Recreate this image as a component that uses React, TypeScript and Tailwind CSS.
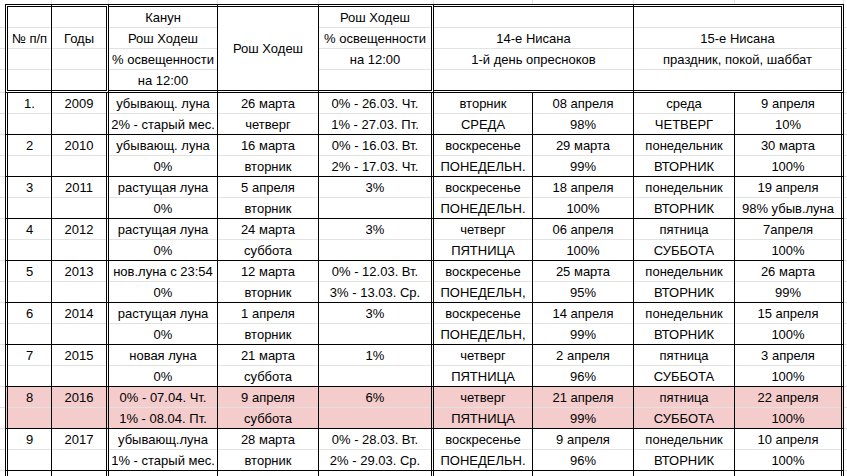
import React from 'react';

// column boxes, borders included (double lines are 3px "border-double")
const COLS = [
  'w-[47px] border-l-[3px] border-r',
  'w-[57px] border-r-[3px]',
  'w-[109px] border-r',
  'w-[101px] border-r',
  'w-[115px] border-r-[3px]',
  'w-[99px] border-r',
  'w-[101px] border-r',
  'w-[101px] border-r',
  'w-[109px] border-r-[3px]',
];

type Pair = [string, string];
type Row = { pink?: boolean; cells: Pair[] };

const rows: Row[] = [
  {
    cells: [
      ['1.', ''], ['2009', ''], ['убывающ. луна', '2% - старый мес.'], ['26 марта', 'четверг'],
      ['0% - 26.03. Чт.', '1% - 27.03. Пт.'], ['вторник', 'СРЕДА'], ['08 апреля', '98%'],
      ['среда', 'ЧЕТВЕРГ'], ['9 апреля', '10%'],
    ],
  },
  {
    cells: [
      ['2', ''], ['2010', ''], ['убывающ. луна', '0%'], ['16 марта', 'вторник'],
      ['0% - 16.03. Вт.', '2% - 17.03. Чт.'], ['воскресенье', 'ПОНЕДЕЛЬН.'], ['29 марта', '99%'],
      ['понедельник', 'ВТОРНИК'], ['30 марта', '100%'],
    ],
  },
  {
    cells: [
      ['3', ''], ['2011', ''], ['растущая луна', '0%'], ['5 апреля', 'вторник'],
      ['3%', ''], ['воскресенье', 'ПОНЕДЕЛЬН.'], ['18 апреля', '100%'],
      ['понедельник', 'ВТОРНИК'], ['19 апреля', '98% убыв.луна'],
    ],
  },
  {
    cells: [
      ['4', ''], ['2012', ''], ['растущая луна', '0%'], ['24 марта', 'суббота'],
      ['3%', ''], ['четверг', 'ПЯТНИЦА'], ['06 апреля', '100%'],
      ['пятница', 'СУББОТА'], ['7апреля', '100%'],
    ],
  },
  {
    cells: [
      ['5', ''], ['2013', ''], ['нов.луна с 23:54', '0%'], ['12 марта', 'вторник'],
      ['0% - 12.03. Вт.', '3% - 13.03. Ср.'], ['воскресенье', 'ПОНЕДЕЛЬН,'], ['25 марта', '95%'],
      ['понедельник', 'ВТОРНИК'], ['26 марта', '99%'],
    ],
  },
  {
    cells: [
      ['6', ''], ['2014', ''], ['растущая луна', '0%'], ['1 апреля', 'вторник'],
      ['3%', ''], ['воскресенье', 'ПОНЕДЕЛЬН,'], ['14 апреля', '99%'],
      ['понедельник', 'ВТОРНИК'], ['15 апреля', '100%'],
    ],
  },
  {
    cells: [
      ['7', ''], ['2015', ''], ['новая луна', '0%'], ['21 марта', 'суббота'],
      ['1%', ''], ['четверг', 'ПЯТНИЦА'], ['2 апреля', '96%'],
      ['пятница', 'СУББОТА'], ['3 апреля', '100%'],
    ],
  },
  {
    pink: true,
    cells: [
      ['8', ''], ['2016', ''], ['0% - 07.04. Чт.', '1% - 08.04. Пт.'], ['9 апреля', 'суббота'],
      ['6%', ''], ['четверг', 'ПЯТНИЦА'], ['21 апреля', '99%'],
      ['пятница', 'СУББОТА'], ['22 апреля', '100%'],
    ],
  },
  {
    cells: [
      ['9', ''], ['2017', ''], ['убывающ.луна', '1% - старый мес.'], ['28 марта', 'вторник'],
      ['0% - 28.03. Вт.', '2% - 29.03. Ср.'], ['воскресенье', 'ПОНЕДЕЛЬН.'], ['9 апреля', '96%'],
      ['понедельник', 'ВТОРНИК'], ['10 апреля', '100%'],
    ],
  },
  // next row, only its top edge shows
  { cells: Array.from({ length: 9 }, () => ['', ''] as Pair) },
];

const Margin = ({ w }: { w: string }) => (
  <div className={`${w} shrink-0`}>
    <div className="h-[21px] border-b border-[#e2e2e2]" />
    <div className="h-[21px] border-b border-[#e2e2e2]" />
  </div>
);

const HeadMargin = ({ w }: { w: string }) => (
  <div className={`${w} shrink-0`}>
    <div className="h-[24px] border-b border-[#e2e2e2]" />
    <div className="h-[21px] border-b border-[#e2e2e2]" />
    <div className="h-[21px] border-b border-[#e2e2e2]" />
    <div className="h-[23px] border-b border-[#e2e2e2]" />
  </div>
);

const Line = ({ children, last }: { children?: React.ReactNode; last?: boolean }) =>
  last ? (
    <div className="flex h-[20px] items-center justify-center whitespace-nowrap">{children}</div>
  ) : (
    <div className="flex h-[21px] items-center justify-center whitespace-nowrap border-b border-[#e2e2e2]">
      {children}
    </div>
  );

const HeadCell = ({ cls, lines }: { cls: string; lines: string[] }) => (
  <div className={`${cls} shrink-0 border-t-[3px] border-b-[3px] border-double border-black`}>
    <Line>{lines[0]}</Line>
    <Line>{lines[1]}</Line>
    <Line>{lines[2]}</Line>
    <Line last>{lines[3]}</Line>
  </div>
);

function Header() {
  return (
    <div className="flex">
      <HeadMargin w="w-[5px]" />
      <HeadCell cls={COLS[0]} lines={['', '№ п/п', '', '']} />
      <HeadCell cls={COLS[1]} lines={['', 'Годы', '', '']} />
      <HeadCell cls={COLS[2]} lines={['Канун', 'Рош Ходеш', '% освещенности', 'на 12:00']} />
      <div
        className={`${COLS[3]} shrink-0 border-t-[3px] border-b-[3px] border-double border-black flex items-center justify-center whitespace-nowrap`}
      >
        Рош Ходеш
      </div>
      <HeadCell cls={COLS[4]} lines={['Рош Ходеш', '% освещенности', 'на 12:00', '']} />
      <HeadCell cls="w-[200px] border-r" lines={['', '14-е Нисана', '1-й день опресноков', '']} />
      <HeadCell cls="w-[210px] border-r-[3px]" lines={['', '15-е Нисана', 'праздник, покой, шаббат', '']} />
      <HeadMargin w="w-[3px]" />
    </div>
  );
}

function DataRow({ row }: { row: Row }) {
  return (
    <div className="flex">
      <Margin w="w-[5px]" />
      {row.cells.map(([a, b], i) => (
        <div
          key={i}
          className={`${COLS[i]} shrink-0 border-b border-double border-black ${row.pink ? 'bg-[#f4cccc]' : 'bg-white'}`}
        >
          <Line>{a}</Line>
          <Line last>{b}</Line>
        </div>
      ))}
      <Margin w="w-[3px]" />
    </div>
  );
}

export default function App() {
  return (
    <div className="h-[476px] w-[847px] overflow-hidden bg-white text-[13px] leading-none text-black font-['Liberation_Sans',Arial,sans-serif]">
      {/* strip above the sheet, only the gridlines */}
      <div className="flex h-[4px]">
        <div className="w-[5px] shrink-0" />
        {COLS.map((c, i) => (
          <div key={i} className={`${c.split(' ')[0]} shrink-0 border-r border-[#e2e2e2]`} />
        ))}
      </div>
      <Header />
      {rows.map((r, i) => (
        <DataRow key={i} row={r} />
      ))}
    </div>
  );
}
